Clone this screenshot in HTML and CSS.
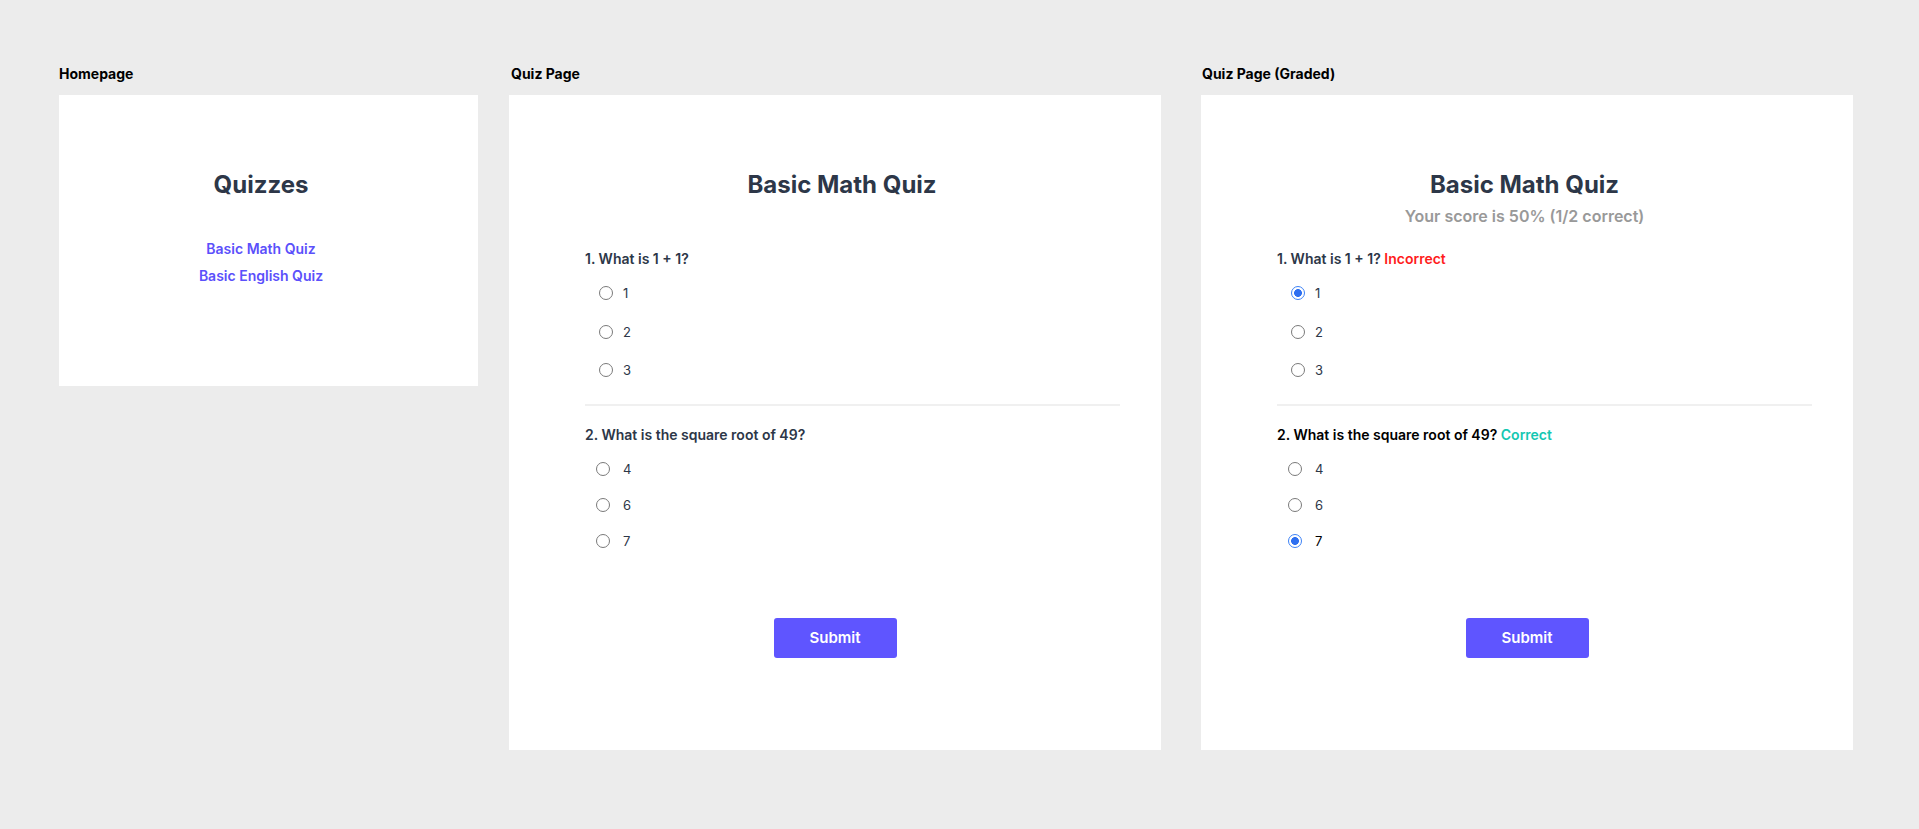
FILE: index.html
```html
<!DOCTYPE html>
<html lang="en">
<head>
<meta charset="utf-8">
<title>Quiz mockups</title>
<link rel="stylesheet" href="styles.css">
</head>
<body>
<main class="board">
  <section class="col col-home">
    <h2 class="frame-label">Homepage</h2>
    <div class="card card-home">
      <div class="home-content">
        <h1 class="title">Quizzes</h1>
        <nav class="quiz-links">
          <a class="quiz-link" href="#">Basic Math Quiz</a>
          <a class="quiz-link" href="#">Basic English Quiz</a>
        </nav>
      </div>
    </div>
  </section>

  <section class="col col-quiz">
    <h2 class="frame-label">Quiz Page</h2>
    <div class="card card-quiz">
      <header class="quiz-header quiz-header-shift">
        <h1 class="title">Basic Math Quiz</h1>
      </header>
      <div class="questions">
        <div class="question q1">
          <p class="q-text">1. What is 1 + 1?</p>
          <div class="options">
            <label class="option"><input class="radio" type="radio" name="a1"><span>1</span></label>
            <label class="option"><input class="radio" type="radio" name="a1"><span>2</span></label>
            <label class="option"><input class="radio" type="radio" name="a1"><span>3</span></label>
          </div>
        </div>
        <hr class="divider">
        <div class="question q2">
          <p class="q-text">2. What is the square root of 49?</p>
          <div class="options">
            <label class="option"><input class="radio" type="radio" name="a2"><span>4</span></label>
            <label class="option"><input class="radio" type="radio" name="a2"><span>6</span></label>
            <label class="option"><input class="radio" type="radio" name="a2"><span>7</span></label>
          </div>
        </div>
      </div>
      <div class="actions">
        <button class="submit" type="button">Submit</button>
      </div>
    </div>
  </section>

  <section class="col col-graded">
    <h2 class="frame-label">Quiz Page (Graded)</h2>
    <div class="card card-quiz">
      <header class="quiz-header quiz-header-graded">
        <h1 class="title">Basic Math Quiz</h1>
        <p class="score">Your score is 50% (1/2 correct)</p>
      </header>
      <div class="questions">
        <div class="question q1">
          <p class="q-text">1. What is 1 + 1? <span class="verdict incorrect">Incorrect</span></p>
          <div class="options">
            <label class="option"><input class="radio" type="radio" name="b1" checked><span>1</span></label>
            <label class="option"><input class="radio" type="radio" name="b1"><span>2</span></label>
            <label class="option"><input class="radio" type="radio" name="b1"><span>3</span></label>
          </div>
        </div>
        <hr class="divider">
        <div class="question q2 answered">
          <p class="q-text">2. What is the square root of 49? <span class="verdict correct">Correct</span></p>
          <div class="options">
            <label class="option"><input class="radio" type="radio" name="b2"><span>4</span></label>
            <label class="option"><input class="radio" type="radio" name="b2"><span>6</span></label>
            <label class="option selected"><input class="radio" type="radio" name="b2" checked><span>7</span></label>
          </div>
        </div>
      </div>
      <div class="actions">
        <button class="submit" type="button">Submit</button>
      </div>
    </div>
  </section>
</main>
</body>
</html>
```

FILE: styles.css
```css
* {
  box-sizing: border-box;
}

html, body {
  margin: 0;
  padding: 0;
}

body {
  background: #ececec;
  font-family: Inter, "Noto Sans", "Liberation Sans", sans-serif;
  color: #2d3748;
  min-height: 829px;
}

.board {
  display: flex;
  align-items: flex-start;
  gap: 31px;
  padding: 65px 0 0 59px;
}

.col {
  flex: none;
}

.col-home {
  width: 419px;
}

.col-quiz,
.col-graded {
  width: 652px;
}

.col-graded {
  margin-left: 9px;
}

.frame-label {
  margin: 0 0 12px 0;
  font-size: 14px;
  line-height: 18px;
  font-weight: 700;
  color: #000;
}

.col-quiz .frame-label {
  padding-left: 2px;
}

.col-graded .frame-label {
  padding-left: 1px;
}

.card {
  background: #fff;
}

.title {
  margin: 0;
  font-size: 24px;
  line-height: 30px;
  font-weight: 700;
  color: #2d3748;
  text-align: center;
}

/* Homepage */
.card-home {
  height: 291px;
  padding-top: 75px;
}

.home-content {
  display: flex;
  flex-direction: column;
  align-items: center;
  padding-right: 15px;
}

.quiz-links {
  display: flex;
  flex-direction: column;
  align-items: center;
  gap: 7px;
  margin-top: 39px;
}

.quiz-link {
  font-size: 14px;
  line-height: 20px;
  font-weight: 600;
  color: #5b50fb;
  text-decoration: none;
}

/* Quiz cards */
.card-quiz {
  height: 655px;
  padding: 75px 41px 0 76px;
  display: flex;
  flex-direction: column;
}

.quiz-header {
  height: 56px;
  display: flex;
  flex-direction: column;
  align-items: center;
  gap: 6px;
  margin-left: -76px;
  margin-right: -41px;
}

.quiz-header-shift {
  padding-left: 14px;
}

.quiz-header-graded {
  padding-right: 5px;
}

.score {
  margin: 0;
  font-size: 16px;
  line-height: 20px;
  font-weight: 600;
  color: #999;
}

.questions {
  margin-top: 23px;
}

.q-text {
  margin: 0;
  font-size: 14px;
  line-height: 20px;
  font-weight: 600;
  color: #2d3748;
}

.answered .q-text {
  color: #000;
}

.verdict.incorrect {
  color: #ff1c1c;
}

.verdict.correct {
  color: #14c7b2;
}

.options {
  display: flex;
  flex-direction: column;
  margin-top: 14px;
}

.q1 .options {
  gap: 18.5px;
}

.q2 .options {
  gap: 16px;
}

.option {
  display: flex;
  align-items: center;
  height: 20px;
  font-size: 13px;
  color: #2d3748;
}

.q1 .option {
  padding-left: 14px;
  gap: 10px;
}

.q2 .option {
  padding-left: 11px;
  gap: 13px;
}

.option.selected {
  color: #000;
}

.radio {
  -webkit-appearance: none;
  appearance: none;
  margin: 0;
  width: 14px;
  height: 14px;
  flex: none;
  border-radius: 50%;
  border: 1px solid #7a7a7a;
  background: #fff;
}

.radio:checked {
  border: 1.5px solid #3d82f6;
  background: radial-gradient(circle, #2e6ff0 0 3.6px, #fff 4.2px);
}

.divider {
  margin: 23.5px 0 19px 0;
  border: 0;
  height: 2px;
  background: #f0f0f0;
}

.actions {
  display: flex;
  justify-content: center;
  margin-top: 67px;
  margin-left: -76px;
  margin-right: -41px;
}

.submit {
  width: 123px;
  height: 40px;
  border: 0;
  border-radius: 3px;
  background: #5f55ff;
  color: #fff;
  font-family: Inter, "Noto Sans", "Liberation Sans", sans-serif;
  font-size: 15px;
  font-weight: 600;
  cursor: pointer;
}
```
